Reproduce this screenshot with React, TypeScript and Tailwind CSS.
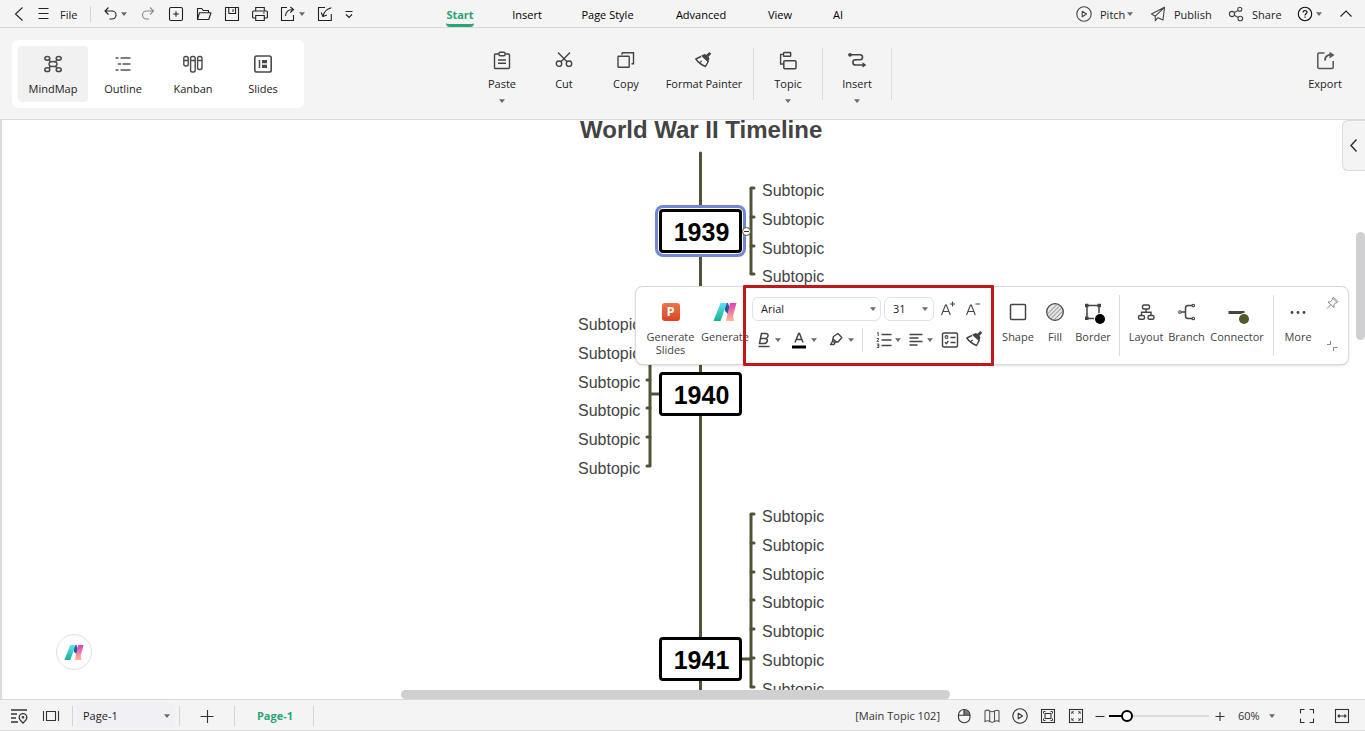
import { ReactNode, useState } from "react";
import clsx from "clsx";

interface IconProps {
  className?: string
  children: ReactNode
}

function Icon({ className, children }: IconProps) {
  return (
    <svg
      viewBox="0 0 20 20"
      className={clsx("size-5 shrink-0", className)}
      fill="none"
      stroke="currentColor"
      strokeWidth="1.1"
      aria-hidden="true"
    >
      {children}
    </svg>
  );
}

function Caret({ className }: { className?: string }) {
  return (
    <svg viewBox="0 0 8 8" className={clsx("size-2 shrink-0 fill-[#6b6b6b]", className)} aria-hidden="true">
      <path d="M1 2.3h6L4 6z" />
    </svg>
  );
}

const BackIcon = () => <Icon><path d="M13.500 3.500 6.500 10l7 6.500" /></Icon>;
const MenuIcon = () => <Icon><path d="M5.500 4.500h10M5.500 9.500h10M5.500 14.500h10" /></Icon>;
const UndoIcon = () => <Icon><path d="M8.500 3.500 5 7l3.500 3.500M5.200 7H12a3.600 3.600 0 0 1 0 8H9.500" /></Icon>;
const RedoIcon = () => <Icon className="text-[#8a8a8a]"><path d="M12 3.500 15.500 7 12 10.500M15.300 7H8.500a3.600 3.600 0 0 0 0 8H11" /></Icon>;
const NewIcon = () => (
  <Icon><rect x="3.500" y="3.500" width="13" height="13" rx="1.500" /><path d="M10 7.200v5.600M7.200 10h5.600" /></Icon>
);
const FolderIcon = () => (
  <Icon><path d="M3.500 15.500v-11h4.200l1.500 2h5.300v2.200M3.500 15.500l2-6.800h11.500l-2.300 6.800z" strokeLinejoin="round" /></Icon>
);
const SaveIcon = () => (
  <Icon><path d="M3.500 3.500h13v13h-13zM6.800 3.500v6h6.700v-6M11 5.200v2.500" strokeLinejoin="round" /></Icon>
);
const PrintIcon = () => (
  <Icon>
    <path d="M5.700 7V3.500h8.600V7M5.500 14H3.600a1 1 0 0 1-1-1V8a1 1 0 0 1 1-1h12.800a1 1 0 0 1 1 1v5a1 1 0 0 1-1 1h-1.900" />
    <path d="M5.700 11.500h8.600v5H5.700zM13 9h1.700" />
  </Icon>
);
const ShareOutIcon = () => (
  <Icon><path d="M9 3.500H3.500v13h12V11M7.500 12c.3-4 3-6.500 7.500-6.500M12.300 2.800 15.500 5.500l-3.200 3" /></Icon>
);
const ImportIcon = () => (
  <Icon><path d="M10 3.500H3.500v13h12.800V10M16.300 3.800C12 5 9 7.500 8 12M6.200 8.500 7.900 12.500l4-1.500" /></Icon>
);
const MoreToolsIcon = () => <Icon><path d="M6.500 7.500h7M7 10.500l3 3 3-3" /></Icon>;
const PlayIcon = ({ className }: { className?: string }) => (
  <Icon className={className}><circle cx="10" cy="10" r="7.200" /><path d="m8.200 7.200 4.300 2.800-4.300 2.800z" strokeLinejoin="round" /></Icon>
);
const PublishIcon = () => (
  <Icon className="text-[#444]"><path d="M16.500 3.300 3.500 10l3.800 2.200zM16.500 3.300 7.300 12.200v4.500l2.700-3 5 2.300z" strokeLinejoin="round" /></Icon>
);
const ShareIcon = () => (
  <Icon className="text-[#444]">
    <circle cx="6" cy="10" r="2.600" /><circle cx="13.800" cy="5.300" r="2" /><circle cx="14.300" cy="14.500" r="2.300" />
    <path d="m8.300 8.700 3.700-2.300M8.300 11.200l4 2.200" />
  </Icon>
);
const HelpIcon = () => (
  <Icon className="text-[#111]"><circle cx="10" cy="10" r="6.700" /><path d="M8 8.600c0-2.800 4-2.600 4-.3 0 1.500-2 1.500-2 3.200M10 12.600v1.200" /></Icon>
);

const MindMapIcon = () => (
  <Icon className="text-[#4a4a4a]">
    <g strokeWidth="1.500">
      <ellipse cx="10" cy="10" rx="4" ry="2.600" />
      <ellipse cx="4.300" cy="4.300" rx="2.500" ry="1.900" /><ellipse cx="15.700" cy="4.300" rx="2.500" ry="1.900" />
      <ellipse cx="4.300" cy="15.700" rx="2.500" ry="1.900" /><ellipse cx="15.700" cy="15.700" rx="2.500" ry="1.900" />
      <path d="m6 5.700 1.500 2.300M14 5.700l-1.500 2.300M6 14.300l1.500-2.300M14 14.300l-1.500-2.300" />
    </g>
  </Icon>
);
const OutlineIcon = () => (
  <Icon className="text-[#555]"><path d="M2.500 4h3M7.500 4h10M5 10h3M9.500 10h8M2.500 16h3M7.500 16h10" strokeWidth="1.500" /></Icon>
);
const KanbanIcon = () => (
  <Icon className="text-[#4a4a4a]">
    <g strokeWidth="1.400">
      <rect x=".8" y="2.500" width="4.400" height="9.500" rx="1.800" /><rect x="7.600" y="2.500" width="4.600" height="15.500" rx="1.800" />
      <rect x="14.600" y="2.500" width="4.400" height="13" rx="1.800" />
      <path d="M.8 6.500h4.400M7.600 6.500h4.600M14.600 6.500H19" />
    </g>
  </Icon>
);
const SlidesIcon = () => (
  <Icon className="text-[#4a4a4a]">
    <rect x="1.800" y="2" width="16.400" height="16" rx="1.800" strokeWidth="1.600" />
    <path d="M6.500 6v8" strokeWidth="1.500" />
    <path d="M9 6h5v3.200H9zM9 10.800h5V14H9z" fill="currentColor" stroke="none" />
  </Icon>
);

const PasteIcon = () => (
  <Icon>
    <rect x="2.500" y="3" width="15" height="14.500" rx="1" strokeWidth="1.400" />
    <rect x="7" y="1.200" width="6" height="3.500" rx="1" className="fill-[#f4f4f4]" strokeWidth="1.400" />
    <path d="M6 9h8M6 12.300h8" strokeWidth="1.400" />
  </Icon>
);
const CutIcon = () => (
  <Icon>
    <circle cx="5" cy="12.700" r="2.700" strokeWidth="1.400" /><circle cx="15" cy="12.700" r="2.700" strokeWidth="1.400" />
    <path d="M4 1.500 13 10.800M16 1.500 7 10.800" strokeWidth="1.400" />
  </Icon>
);
const CopyIcon = () => (
  <Icon><rect x="2" y="5.300" width="11.200" height="11" rx=".5" strokeWidth="1.400" /><path d="M6 1.800h11.500v11H15.500M6 1.800v2" strokeWidth="1.400" /></Icon>
);
const BrushIcon = ({ className }: { className?: string }) => (
  <Icon className={className}>
    <path d="M7 5.500 1.800 8c2 3 5 5.500 9.700 7.500l3-5.500" strokeWidth="1.400" strokeLinejoin="round" />
    <path d="M7 4.800 10.500 3l2 .8 2.800-2.800 2 1.800-2.800 2.900 1 2-1.500 3.500z" fill="currentColor" stroke="none" />
    <path d="m6 11.500 1.700-1.700" />
  </Icon>
);
const TopicIcon = () => (
  <Icon>
    <rect x="5.500" y="1.500" width="7.200" height="3.800" rx=".6" strokeWidth="1.400" />
    <rect x="5.800" y="9.700" width="12.200" height="8" rx="1" strokeWidth="1.500" />
    <path d="M5.500 3.400H2.600v9.600h3.200" strokeWidth="1.400" />
  </Icon>
);
const RelationIcon = () => (
  <Icon>
    <circle cx="3" cy="3.800" r="1.900" fill="currentColor" stroke="none" />
    <path d="M3 3.800h10a2.500 2.500 0 0 1 0 5H8.500a2.600 2.600 0 0 0 0 5.200H16" strokeWidth="1.600" />
    <path d="M15.500 11.300 19.300 14l-3.800 2.700z" fill="currentColor" stroke="none" />
  </Icon>
);
const ExportIcon = () => (
  <Icon className="text-[#555]">
    <path d="M9.500 2H4a1.200 1.200 0 0 0-1.200 1.200v13A1.200 1.200 0 0 0 4 17.400h13a1.200 1.200 0 0 0 1.200-1.200V10" strokeWidth="1.500" />
    <path d="M10 9.500c0-4 2.500-5.500 5.500-5.800" strokeWidth="1.800" />
    <path d="M14.500.8 19.500 4 14.500 7.500z" fill="currentColor" stroke="none" />
  </Icon>
);

// gradient "N" mark, used in the toolbar and in the floating assistant button
function AiLogo({ id, className }: { id: string, className?: string }) {
  return (
    <svg viewBox="0 0 24 20" className={clsx("shrink-0", className)} aria-hidden="true">
      <defs>
        <linearGradient id={id + "-teal"} x1="0" y1="0" x2="0" y2="1">
          <stop offset="0" stopColor="#62dff0" /><stop offset="1" stopColor="#14b195" />
        </linearGradient>
        <linearGradient id={id + "-pink"} x1="0" y1="0" x2="0" y2="1">
          <stop offset="0" stopColor="#df3fb5" /><stop offset="1" stopColor="#ffb98e" />
        </linearGradient>
      </defs>
      <path d="M12 1h3l3 9-2 9h3l-3-6-4-4z" fill="#2556a8" />
      <path d="M7.500 1h6.500L7.500 19H.500z" fill={`url(#${id}-teal)`} />
      <path d="M17 1h6.500L20 14l1 5h-8z" fill={`url(#${id}-pink)`} />
    </svg>
  );
}

interface ToolButtonProps {
  label: string
  icon: ReactNode
  width: string
  caret?: boolean
}

function RibbonButton({ label, icon, width, caret }: ToolButtonProps) {
  return (
    <button className={clsx("flex flex-col items-center pt-[3px] text-[#444]", width)}>
      {icon}
      <span className="mt-[5px] leading-4 text-[#222] whitespace-nowrap">{label}</span>
      {caret && <Caret className="mt-[5px]" />}
    </button>
  );
}

function FloatButton({ label, icon, width }: ToolButtonProps) {
  return (
    <button className={clsx("flex shrink-0 flex-col items-center pt-[15px] text-[#444]", width)}>
      {icon}
      <span className="mt-2 leading-[13px]">{label}</span>
    </button>
  );
}

function ViewTab({ label, icon, active }: { label: string, icon: ReactNode, active?: boolean }) {
  return (
    <button className={clsx("flex h-14 w-[70px] flex-col items-center rounded pt-2", active && "bg-[#f1f1f1]")}>
      {icon}
      <span className="mt-[7px] leading-4 text-[#222]">{label}</span>
    </button>
  );
}

const tabs = [
  { name: "Start", width: "w-7" },
  { name: "Insert", width: "w-7" },
  { name: "Page Style", width: "w-[55px]" },
  { name: "Advanced", width: "w-[54px]" },
  { name: "View", width: "w-[26px]" },
  { name: "AI", width: "w-3" },
]

function TopBar() {
  return (
    <header className="flex h-7 shrink-0 items-center border-b border-[#d9d9d9] text-[#222]">
      <div className="flex w-[446px] shrink-0 items-center pl-[5px]">
        <button aria-label="Back" className="flex w-7 justify-center"><BackIcon /></button>
        <button className="flex w-[57px] items-center gap-[7px]"><MenuIcon /><span className="pt-[3px]">File</span></button>
        <span className="mr-[5px] h-4 w-px bg-[#d4d4d4]" />
        <button aria-label="Undo" className="flex w-[38px] items-center pl-1"><UndoIcon /><Caret /></button>
        <button aria-label="Redo" className="flex w-7 justify-center"><RedoIcon /></button>
        <button aria-label="New" className="flex w-7 justify-center"><NewIcon /></button>
        <button aria-label="Open" className="flex w-7 justify-center"><FolderIcon /></button>
        <button aria-label="Save" className="flex w-7 justify-center"><SaveIcon /></button>
        <button aria-label="Print" className="flex w-7 justify-center"><PrintIcon /></button>
        <button aria-label="Send" className="flex w-[37px] items-center pl-1"><ShareOutIcon /><Caret /></button>
        <button aria-label="Import" className="flex w-7 justify-center"><ImportIcon /></button>
        <button aria-label="More tools" className="flex w-5 justify-center"><MoreToolsIcon /></button>
      </div>

      <nav className="flex h-full gap-[39px]">
        {tabs.map((tab) => {
          return (
            <a
              key={tab.name}
              href="#"
              className={clsx(
                "flex h-full items-center justify-center border-b-[3px] pt-[6px] whitespace-nowrap",
                tab.width,
                tab.name === "Start" ? "rounded-b-sm border-[#2ba478] font-bold text-[#2ba478]" : "border-transparent text-black"
              )}
            >
              {tab.name}
            </a>
          );
        })}
      </nav>

      <div className="ml-auto flex items-center pr-[9px]">
        <button className="flex w-[74px] items-center"><PlayIcon className="text-[#444]" /><span className="ml-[6px] pt-[3px]">Pitch</span><Caret className="ml-px" /></button>
        <button className="flex w-[78px] items-center gap-[6px]"><PublishIcon /><span className="pt-[3px]">Publish</span></button>
        <button className="flex w-[69px] items-center gap-[6px]"><ShareIcon /><span className="pt-[3px]">Share</span></button>
        <button aria-label="Help" className="flex w-[41px] items-center"><HelpIcon /><Caret /></button>
        <button aria-label="Collapse ribbon"><Icon><path d="m4.500 12.500 5.500-5.500 5.500 5.500" /></Icon></button>
      </div>
    </header>
  );
}

function Ribbon() {
  return (
    <div className="flex h-[92px] shrink-0 items-start border-b border-[#d9d9d9] pt-3 pl-3">
      <div className="mr-[167px] flex shrink-0 rounded-md bg-white p-[6px]">
        <ViewTab label="MindMap" icon={<MindMapIcon />} active />
        <ViewTab label="Outline" icon={<OutlineIcon />} />
        <ViewTab label="Kanban" icon={<KanbanIcon />} />
        <ViewTab label="Slides" icon={<SlidesIcon />} />
      </div>

      <div className="flex pt-2">
        <RibbonButton label="Paste" icon={<PasteIcon />} width="w-[62px]" caret />
        <RibbonButton label="Cut" icon={<CutIcon />} width="w-[62px]" />
        <RibbonButton label="Copy" icon={<CopyIcon />} width="w-[62px]" />
        <RibbonButton label="Format Painter" icon={<BrushIcon />} width="w-[94px] mr-[2px]" />
        <span className="h-[52px] w-px bg-[#dcdcdc]" />
        <RibbonButton label="Topic" icon={<TopicIcon />} width="w-[68px]" caret />
        <span className="h-[52px] w-px bg-[#dcdcdc]" />
        <RibbonButton label="Insert" icon={<RelationIcon />} width="w-[68px]" caret />
        <span className="h-[52px] w-px bg-[#dcdcdc]" />
      </div>

      <div className="ml-auto pt-2 pr-2">
        <RibbonButton label="Export" icon={<ExportIcon />} width="w-16" />
      </div>
    </div>
  );
}

interface Topic {
  year: string
  top: number
  side: "left" | "right"
  firstChild: number
  children: number
  selected?: boolean
}

const TRUNK_X = 700
const ROW_STEP = 115 / 4

const topics: Topic[] = [
  { year: "1939", top: 89, side: "right", firstChild: 70, children: 4, selected: true },
  { year: "1940", top: 252, side: "left", firstChild: 204, children: 6 },
  { year: "1941", top: 517, side: "right", firstChild: 396, children: 7 },
]

function rowY(topic: Topic, index: number) {
  return topic.firstChild + Math.round(index * ROW_STEP)
}

function Branch({ topic }: { topic: Topic }) {
  const right = topic.side === "right"
  const spine = right ? TRUNK_X + 51 : TRUNK_X - 50
  const tip = right ? spine + 3 : spine - 3
  const rows = Array.from({ length: topic.children }, (_, i) => rowY(topic, i) - 2)
  const linkY = topic.top + 22

  return (
    <g>
      <path d={`M${spine} ${rows[0]}V${rows[rows.length - 1]}M${TRUNK_X} ${linkY}H${spine}`} />
      {rows.map((y) => <path key={y} d={`M${spine} ${y}H${tip}`} strokeLinecap="round" />)}
    </g>
  );
}

function MindMap() {
  return (
    <>
      <svg className="absolute top-0 left-0 h-full w-full" fill="none" stroke="#505436" strokeWidth="3" aria-hidden="true">
        <path d="M700.500 33V600" strokeLinecap="round" />
        {topics.map((topic) => <Branch key={topic.year} topic={topic} />)}
      </svg>

      <h1 className="absolute -top-1 left-[580px] text-2xl leading-7 font-bold whitespace-nowrap text-[#444]">
        World War II Timeline
      </h1>

      {topics.map((topic) => {
        return (
          <div key={topic.year}>
            <div
              style={{ top: topic.top, left: TRUNK_X - 41 }}
              className={clsx(
                "absolute flex h-11 w-[83px] items-center justify-center rounded border-[3px] border-black bg-white pt-1 pl-[2px] text-[25px] font-bold text-black",
                topic.selected && "shadow-[0_0_0_1px_white,0_0_0_4px_#7286d3]"
              )}
            >
              {topic.year}
            </div>
            {Array.from({ length: topic.children }, (_, i) => {
              return (
                <span
                  key={i}
                  style={{ top: rowY(topic, i) - 9, left: topic.side === "right" ? 762 : 578 }}
                  className="absolute text-base leading-5 text-[#444]"
                >
                  Subtopic
                </span>
              );
            })}
          </div>
        );
      })}

      <button aria-label="Collapse branch" className="absolute top-[107px] left-[742px] flex size-[9px] items-center justify-center rounded-full border border-[#505436] bg-white">
        <span className="h-px w-[5px] bg-[#333]" />
      </button>
    </>
  );
}

function FormatGroup() {
  const [font, setFont] = useState("Arial")
  const [size, setSize] = useState("31")

  return (
    <div className="flex w-[234px] shrink-0 flex-col pt-[10px]">
      <div className="flex h-6 items-center text-[#444]">
        <div className="relative mr-[3px]">
          <select
            aria-label="Font"
            value={font}
            onChange={(e) => setFont(e.target.value)}
            className="h-6 w-[129px] appearance-none rounded-md border border-[#e2e2e2] bg-white pl-2 text-[#222] outline-none"
          >
            <option>Arial</option>
          </select>
          <Caret className="pointer-events-none absolute top-2 right-1" />
        </div>
        <div className="relative mr-px">
          <select
            aria-label="Font size"
            value={size}
            onChange={(e) => setSize(e.target.value)}
            className="h-6 w-[50px] appearance-none rounded-md border border-[#e2e2e2] bg-white pl-2 text-[#222] outline-none"
          >
            <option>31</option>
          </select>
          <Caret className="pointer-events-none absolute top-2 right-[5px]" />
        </div>
        <button aria-label="Increase font size" className="flex w-[26px] justify-center">
          <Icon><path d="m3.500 16 4-10h.8l4 10M5 12.500h6M12 5h5M14.500 2.500v5" /></Icon>
        </button>
        <button aria-label="Decrease font size" className="flex w-[26px] justify-center">
          <Icon><path d="m3.500 16 4-10h.8l4 10M5 12.500h6M12.500 5h4.500" /></Icon>
        </button>
      </div>

      <div className="mt-[7px] flex items-center text-[#444]">
        <button aria-label="Bold" className="flex w-9 items-center pl-[2px]">
          <Icon>
            <path d="M7.500 3.500h4.300c3.500 0 2.700 5-.8 5H6.600h4.600c3.500 0 2.500 5-1.200 5H5.500z" strokeWidth="1.500" />
            <path d="M4.500 16.500h11" strokeWidth="1.500" />
          </Icon>
          <Caret />
        </button>
        <button aria-label="Font color" className="flex w-9 items-center pl-px">
          <Icon>
            <path d="m6 12.500 3.600-9h.9l3.500 9M7.200 9.500H13" strokeWidth="1.500" />
            <path d="M3 17h14" className="stroke-black" strokeWidth="3" />
          </Icon>
          <Caret className="ml-px" />
        </button>
        <button aria-label="Highlight" className="flex w-[38px] items-center pl-[2px]">
          <Icon>
            <path d="m6.500 10.500 1-4 4.500-3 3.800 4-3.500 4.300-4 .7zM7 10.500l-2.500 4h3.300l1.200-1.500M6.500 8.500l4 3.500" strokeWidth="1.400" strokeLinejoin="round" />
          </Icon>
          <Caret className="ml-px" />
        </button>
        <span className="h-6 w-px bg-[#dcdcdc]" />
        <button aria-label="Numbering" className="flex w-[42px] items-center pl-[11px]">
          <Icon>
            <path d="M7.500 4.500h10M7.500 10h10M7.500 15.500h10" strokeWidth="1.500" />
            <path d="M3 3.200l1.200-.7v3.500M2.800 8.500h1.700v1.300l-1.700 1.500h2M2.800 14h2v3.500h-2M3.200 15.700h1.600" strokeWidth="1" />
          </Icon>
          <Caret />
        </button>
        <button aria-label="Align" className="flex w-[31px] items-center pl-px">
          <Icon><path d="M3.500 4.500h13M3.500 8h9M3.500 11.500h13M3.500 15h8" strokeWidth="1.500" /></Icon>
          <Caret />
        </button>
        <button aria-label="Checklist" className="flex w-7 justify-center">
          <Icon>
            <rect x="2.500" y="3" width="15" height="14" rx="1.500" strokeWidth="1.400" />
            <circle cx="6.500" cy="7" r="1.400" />
            <path d="M10.500 7.500h5M10.500 12.500h5M5 12.300l1.300 1.400 2-2.700" strokeWidth="1.400" />
          </Icon>
        </button>
        <button aria-label="Format painter" className="flex flex-1 justify-center"><BrushIcon className="size-4" /></button>
      </div>
    </div>
  );
}

function FloatingToolbar() {
  return (
    <div className="absolute top-[166px] left-[635px] flex h-[79px] w-[714px] rounded-lg border border-[#d9d9d9] bg-white pl-[7px] shadow-sm">
      <FloatButton
        width="w-[55px]"
        label="Generate Slides"
        icon={
          <span className="flex size-5 items-center justify-center">
            <span className="flex size-[18px] items-center justify-center rounded-[3px] bg-linear-to-b from-[#ef7348] to-[#d9431f] text-[13px] font-bold text-white">P</span>
          </span>
        }
      />
      <FloatButton width="w-[54px]" label="Generate" icon={<AiLogo id="bar" className="h-5 w-6" />} />

      <FormatGroup />

      <div className="ml-[13px] flex">
        <FloatButton width="w-[38px]" label="Shape" icon={<Icon><rect x="2.500" y="2.500" width="15" height="15" rx="1" strokeWidth="1.500" /></Icon>} />
        <FloatButton
          width="w-[36px]"
          label="Fill"
          icon={
            <Icon>
              <circle cx="10" cy="10" r="8.300" className="fill-[#e4e4e4]" strokeWidth="1.300" />
              <path d="M2.500 12 12 2.500M3.500 15 15 3.500M5.500 17 17 5.500M9 17.800 17.800 9" className="stroke-[#888]" strokeWidth="1" />
            </Icon>
          }
        />
        <FloatButton
          width="w-10"
          label="Border"
          icon={
            <Icon className="overflow-visible">
              <path d="M4 3.500h12v13H4z" strokeWidth="1.500" />
              <path d="M2 1.800h3.500v3.500H2zM14.500 1.800H18v3.500h-3.500zM2 14.500h3.500V18H2z" fill="currentColor" stroke="none" />
              <circle cx="17" cy="17" r="6" className="fill-white" stroke="none" />
              <circle cx="17" cy="17" r="5" className="fill-black" stroke="none" />
            </Icon>
          }
        />
      </div>
      <span className="mt-2 ml-[6px] h-[61px] w-px bg-[#dcdcdc]" />
      <div className="ml-[5px] flex">
        <FloatButton
          width="w-[42px]"
          label="Layout"
          icon={
            <Icon>
              <g strokeWidth="1.400">
                <rect x="6.500" y="3" width="7" height="4" rx="1.500" />
                <rect x="2.500" y="13.500" width="6" height="3.800" rx="1.500" /><rect x="12" y="13.500" width="6" height="3.800" rx="1.500" />
                <path d="M10 7v3.300M5.500 13.500v-3.200h9.500v3.200" />
              </g>
            </Icon>
          }
        />
        <FloatButton
          width="w-[39px]"
          label="Branch"
          icon={
            <Icon>
              <circle cx="3" cy="10" r="1.300" />
              <path d="M4.500 10h4M15.500 3.500h-4.500a2.500 2.500 0 0 0-2.500 2.500v8a2.500 2.500 0 0 0 2.500 2.500h4.500" strokeWidth="1.500" />
              <circle cx="16.300" cy="3.500" r="1.300" /><circle cx="16.300" cy="16.500" r="1.300" />
            </Icon>
          }
        />
        <FloatButton
          width="w-[62px]"
          label="Connector"
          icon={
            <Icon className="overflow-visible">
              <path d="M1.500 10.500h16" className="stroke-[#444]" strokeWidth="3" />
              <circle cx="17" cy="17" r="6" className="fill-white" stroke="none" />
              <circle cx="17" cy="17" r="5" className="fill-[#505a2c]" stroke="none" />
            </Icon>
          }
        />
      </div>
      <span className="mt-2 ml-[5px] h-[61px] w-px bg-[#dcdcdc]" />
      <FloatButton
        width="w-12"
        label="More"
        icon={<Icon><g fill="currentColor" stroke="none"><circle cx="4" cy="10.500" r="1.400" /><circle cx="10" cy="10.500" r="1.400" /><circle cx="16" cy="10.500" r="1.400" /></g></Icon>}
      />
      <div className="flex flex-col justify-between pt-[6px] pb-2 text-[#888]">
        <button aria-label="Pin toolbar"><Icon><path d="m10.500 5 4.500 4.500-1.500.5-1.700 2 .2 2.700L6 9l2.600-.2 1.500-2zM9 11.500l-4 4M10.500 5l1-.8 4.300 4.300-.8 1" strokeWidth="1" /></Icon></button>
        <button aria-label="Shrink toolbar"><Icon><path d="M5 8.500h3.500V5M11.500 15v-3.500h4" strokeWidth="1" /></Icon></button>
      </div>

      <span className="pointer-events-none absolute -top-[2px] left-[107px] h-[81px] w-[251px] rounded-[1px] border-[3px] border-[#c0191c]" />
    </div>
  );
}

function Canvas() {
  return (
    <main className="relative flex min-h-0 flex-1 flex-col border-l-2 border-[#dcdcdc] bg-white font-['Liberation_Sans',Arial,sans-serif]">
      <div className="relative -ml-[2px] min-h-0 flex-1 overflow-hidden">
        <MindMap />
        <div className="font-['Open_Sans','Noto_Sans',sans-serif]"><FloatingToolbar /></div>

        <button aria-label="Assistant" className="absolute bottom-5 left-14 flex size-9 items-center justify-center rounded-full border border-[#e0e0e0] bg-white">
          <AiLogo id="chat" className="h-[17px] w-5" />
        </button>
        <button aria-label="Open side panel" className="absolute top-0 right-0 flex h-[51px] w-[23px] items-center justify-center rounded-l-md border border-r-0 border-[#dcdcdc] bg-[#f4f4f4]">
          <Icon className="text-[#333]"><path d="M12.500 3.500 7 9.500l5.500 6" strokeWidth="1.500" /></Icon>
        </button>
        <span className="absolute top-[112px] right-0 h-[108px] w-[9px] rounded-full bg-[#d0d0d2]" />
      </div>
      <div className="h-[9px] shrink-0">
        <div className="ml-[399px] h-[9px] w-[549px] rounded-full bg-[#d0d0d2]" />
      </div>
    </main>
  );
}

function StatusBar() {
  const [zoom, setZoom] = useState(14)

  return (
    <footer className="flex h-8 shrink-0 items-center border-y border-[#d9d9d9] pt-px text-[#333]">
      <button aria-label="Locate" className="ml-[9px]">
        <Icon>
          <path d="M2 4h16M2 8h6M2 12h5M2 16h7" strokeWidth="1.300" />
          <path d="M14 17c-2.500-2.300-3.800-4-3.800-5.600a3.800 3.800 0 0 1 7.600 0C17.800 13 16.500 14.700 14 17z" strokeWidth="1.300" />
          <circle cx="14" cy="11.300" r=".8" />
        </Icon>
      </button>
      <button aria-label="Presentation pages" className="ml-3">
        <Icon><path d="M2.500 5v10M17.500 5v10M5.500 5.500h9v9h-9z" /></Icon>
      </button>
      <span className="ml-[11px] h-5 w-px bg-[#d4d4d4]" />
      <div className="relative mx-1">
        <select aria-label="Page" className="h-[26px] w-[98px] appearance-none rounded bg-[#f1f1f5] pt-px pl-[6px] text-[#222] outline-none">
          <option>Page-1</option>
        </select>
        <Caret className="pointer-events-none absolute top-[9px] right-1" />
      </div>
      <span className="h-5 w-px bg-[#d4d4d4]" />
      <button aria-label="Add page" className="flex w-[54px] justify-center"><Icon><path d="M3.500 10.500h13M10.500 4v13" /></Icon></button>
      <span className="h-5 w-px bg-[#d4d4d4]" />
      <button className="w-[78px] pt-[2px] pl-[2px] font-bold text-[#2ba478]">Page-1</button>
      <span className="h-5 w-px bg-[#d4d4d4]" />

      <div className="ml-auto flex items-center pr-[13px]">
        <span className="mr-[14px] pt-[2px] text-right">[Main Topic 102]</span>
        <button aria-label="Mouse mode" className="w-7">
          <Icon>
            <path d="M10 4h.500a5 5 0 0 1 5 5H10z" stroke="none" className="fill-[#777]" />
            <rect x="4.500" y="3.500" width="11.500" height="13.300" rx="5.500" /><path d="M4.500 9.300H16M10 3.500v5.800" />
          </Icon>
        </button>
        <button aria-label="Overview" className="w-7">
          <Icon className="text-[#555]"><path d="M3 5c2-1.200 3.500-1 4.700 0 1.300.8 3.300.8 4.800 0 1.500-1 3-1 4.500 0v10.500c-1.500-1-3-1-4.500 0-1.500.8-3.500.8-4.800 0-1.200-1-2.700-1-4.700 0zM7.700 5v10.500M12.500 5v10.500" /></Icon>
        </button>
        <button aria-label="Play" className="w-7"><PlayIcon /></button>
        <button aria-label="Fit page" className="w-7">
          <Icon><rect x="3.500" y="3.500" width="13" height="13" /><rect x="7" y="7.500" width="6" height="5" /><path d="M5.500 7.500v-2h2M12.500 5.500h2v2M14.500 12.500v2h-2M7.500 14.500h-2v-2" strokeWidth=".9" /></Icon>
        </button>
        <button aria-label="Fit drawing" className="w-7">
          <Icon><rect x="3.500" y="3.500" width="13" height="13" /><path d="M5.800 8V5.800H8M12 5.800h2.200V8M14.200 12v2.200H12M8 14.200H5.800V12M6 6l1.700 1.700M14 6l-1.700 1.700M14 14l-1.700-1.700M6 14l1.700-1.700" strokeWidth=".8" /></Icon>
        </button>
        <button aria-label="Zoom out" className="flex w-[15px]"><Icon className="-ml-1"><path d="M5.500 10.500h9" /></Icon></button>
        <input
          type="range"
          aria-label="Zoom"
          value={zoom}
          onChange={(e) => setZoom(Number(e.target.value))}
          className="h-[2px] w-[100px] appearance-none bg-[linear-gradient(to_right,black_18px,#dcdcdc_18px)] [&::-webkit-slider-thumb]:size-3 [&::-webkit-slider-thumb]:appearance-none [&::-webkit-slider-thumb]:rounded-full [&::-webkit-slider-thumb]:border-2 [&::-webkit-slider-thumb]:border-black [&::-webkit-slider-thumb]:bg-white"
        />
        <button aria-label="Zoom in" className="ml-px"><Icon><path d="M5.500 10.500h9M10 6v9" /></Icon></button>
        <div className="relative ml-2">
          <select aria-label="Zoom level" className="h-6 w-[38px] appearance-none bg-transparent pt-[2px] outline-none">
            <option>60%</option>
          </select>
          <Caret className="pointer-events-none absolute top-2 right-0" />
        </div>
        <button aria-label="Full screen" className="ml-[21px]">
          <Icon><path d="M3.500 7.500v-4h4M12.500 3.500h4v4M16.500 12.500v4h-4M7.500 16.500h-4v-4" /></Icon>
        </button>
        <button aria-label="Fit width" className="ml-[15px]">
          <Icon><rect x="3.500" y="3.500" width="13" height="13" /><path d="M6 10h8M7.500 8.500 6 10l1.500 1.500M12.500 8.500 14 10l-1.500 1.500" /></Icon>
        </button>
      </div>
    </footer>
  );
}

export default function App() {
  return (
    <div className="flex h-screen flex-col overflow-hidden bg-[#f4f4f4] font-['Open_Sans','Noto_Sans',sans-serif] text-[11px]">
      <TopBar />
      <Ribbon />
      <Canvas />
      <StatusBar />
    </div>
  );
}
